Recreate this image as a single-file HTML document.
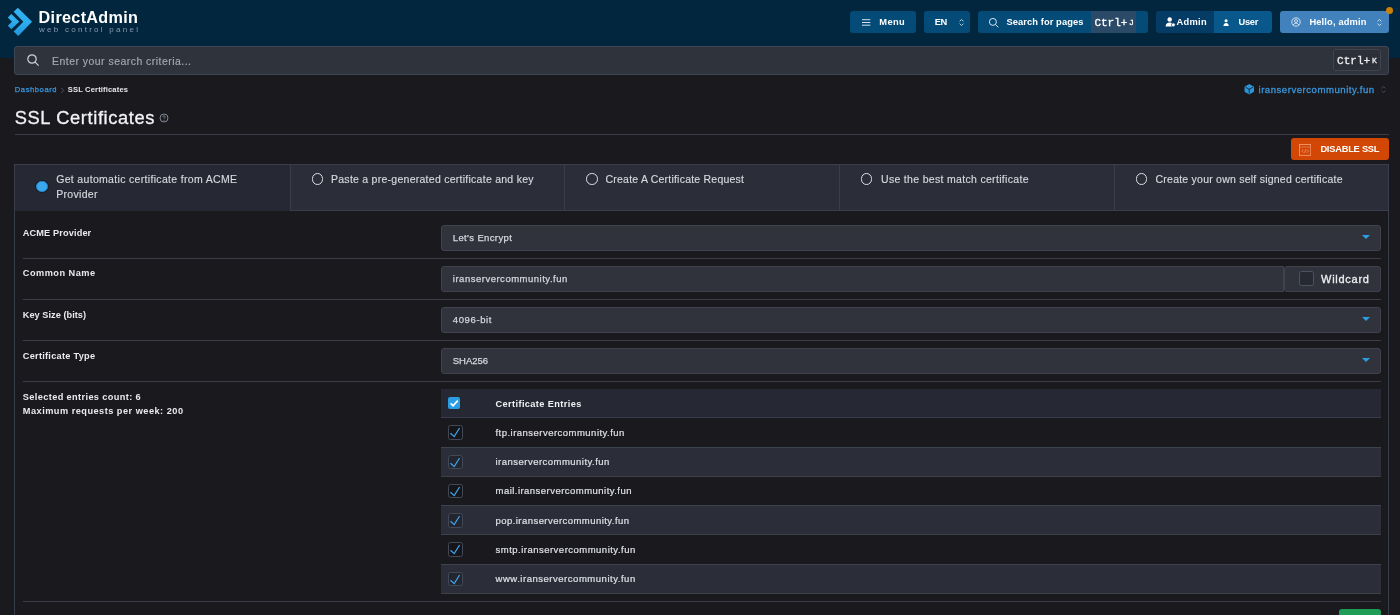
<!DOCTYPE html>
<html>
<head>
<meta charset="utf-8">
<title>SSL Certificates</title>
<style>
*{box-sizing:border-box;margin:0;padding:0}
html,body{width:1400px;height:615px;overflow:hidden;background:#1a191d;font-family:"Liberation Sans",sans-serif;color:#e6e8ec}
.a{position:absolute}
.t{position:absolute;white-space:pre}
#hdr{position:absolute;left:0;top:0;width:1400px;height:58px;background:#02263d}
.nb{position:absolute;top:11px;height:21.5px;border-radius:3px;background:#054b78}
#search{position:absolute;left:14px;top:46px;width:1375px;height:29px;background:#2f333c;border:1px solid #3e4656;border-radius:3px}
.hr{position:absolute;height:1px;background:#3a3d46}
#panel{position:absolute;left:14px;top:164px;width:1375px;height:470px;border:1px solid #383d4a}
.tab{position:absolute;top:164px;height:47px;background:#2b2e38;border:1px solid #3a3e4c}
.r{position:absolute;top:8.4px;width:11.6px;height:11.6px;border:1.5px solid #dfe1e6;border-radius:50%}
.fld{position:absolute;left:441px;height:26px;background:#30333c;border:1px solid #40434d;border-radius:3px}
.caret{position:absolute;width:0;height:0;border-left:4.2px solid transparent;border-right:4.2px solid transparent;border-top:4.6px solid #2b9de2}
.row{position:absolute;left:441px;width:940px;background:#2b2e38;border-top:1px solid #3c424e;border-bottom:1px solid #3d3f49}
.cb{position:absolute;left:448.3px;width:14.6px;height:14.6px;border:1px solid #424856;border-radius:2.5px;background:rgba(10,10,16,.22)}
.cb svg{position:absolute;left:0;top:0;width:12.6px;height:12.6px}
#tx{position:absolute;left:0;top:0;width:1400px;height:615px;will-change:transform}
</style>
</head>
<body>
<div id="hdr"></div>

<!-- logo -->
<svg class="a" style="left:0;top:0;width:40px;height:44px" viewBox="0 0 40 44">
  <defs><linearGradient id="lg" x1="0" y1="0" x2="0" y2="1"><stop offset="0" stop-color="#33b3f2"/><stop offset=".5" stop-color="#2eaef0"/><stop offset="1" stop-color="#1f96da"/></linearGradient></defs>
  <polygon points="17.8,7.8 32.1,21.8 18.2,35.9 13.7,31.5 23.3,21.8 13.7,11.7" fill="url(#lg)"/>
  <polygon points="11.3,13.9 19.3,21.7 11.3,29.3 7.8,25.8 12,21.7 7.8,17.4" fill="url(#lg)"/>
</svg>

<!-- nav buttons -->
<div class="nb" style="left:849.8px;width:66.2px">
  <svg class="a" style="left:12px;top:7px;width:9px;height:9px" viewBox="0 0 9 9"><path d="M0 1.7h8.3M0 4.5h8.3M0 7.2h8.3" stroke="#dfeaf5" stroke-width=".95"/></svg>
</div>
<div class="nb" style="left:923.5px;width:46.5px">
  <svg class="a" style="left:34.5px;top:7px;width:7px;height:9px" viewBox="0 0 7 9"><path d="M1.6 3.3L3.5 1.5L5.4 3.3M1.6 5.7L3.5 7.5L5.4 5.7" fill="none" stroke="#c9dcee" stroke-width=".9"/></svg>
</div>
<div class="nb" style="left:977.6px;width:170.4px">
  <svg class="a" style="left:10.5px;top:5.5px;width:12px;height:12px" viewBox="0 0 12 12"><circle cx="4.9" cy="4.9" r="3.5" fill="none" stroke="#d7e6f4" stroke-width="1"/><path d="M7.5 7.5L10.3 10.3" stroke="#d7e6f4" stroke-width="1"/></svg>
  <div class="a" style="left:113.5px;top:0;width:45.2px;height:21.5px;background:#2a4a68"></div>
</div>
<div class="nb" style="left:1156px;width:59px;background:#053c65;border-radius:3px 0 0 3px">
  <svg class="a" style="left:8.6px;top:5.8px;width:11.2px;height:10.2px" viewBox="0 0 11 10"><circle cx="4.6" cy="2.5" r="2.2" fill="#fff"/><path d="M0.6 9.3C0.6 6.6 2.3 5.3 4.6 5.3S8.6 6.6 8.6 9.3Z" fill="#fff"/><circle cx="8.2" cy="7.7" r="1.9" fill="#fff" stroke="#053c65" stroke-width=".7"/></svg>
</div>
<div class="nb" style="left:1214.4px;width:57.6px;border-radius:0 3px 3px 0;background:#08588c">
  <svg class="a" style="left:8.4px;top:7.8px;width:6.2px;height:7.6px" viewBox="0.6 0.3 6.8 9.2"><circle cx="4" cy="2.4" r="1.9" fill="#fff"/><path d="M0.8 9.3C0.8 6.6 2 5.1 4 5.1S7.2 6.6 7.2 9.3Z" fill="#fff"/></svg>
</div>
<div class="nb" style="left:1279.6px;width:109.4px;background:#4182bc">
  <svg class="a" style="left:11.5px;top:6px;width:10px;height:10px" viewBox="0 0 10 10"><circle cx="5" cy="5" r="4.2" fill="none" stroke="#e5eef7" stroke-width=".85"/><circle cx="5" cy="4" r="1.5" fill="none" stroke="#e5eef7" stroke-width=".85"/><path d="M2.3 8C2.9 6.6 3.8 6.3 5 6.3S7.1 6.6 7.7 8" fill="none" stroke="#e5eef7" stroke-width=".85"/></svg>
  <svg class="a" style="left:96.5px;top:7px;width:7px;height:9px" viewBox="0 0 7 9"><path d="M1.6 3.3L3.5 1.5L5.4 3.3M1.6 5.7L3.5 7.5L5.4 5.7" fill="none" stroke="#d9e7f5" stroke-width=".9"/></svg>
</div>
<div class="a" style="left:1385.5px;top:7px;width:7.2px;height:7.2px;border-radius:50%;background:#c8820a"></div>

<!-- search bar -->
<div id="search">
  <svg class="a" style="left:11.2px;top:5.8px;width:15px;height:15px" viewBox="0 0 15 15"><circle cx="6" cy="6" r="4.2" fill="none" stroke="#d0d3da" stroke-width="1.2"/><path d="M9.1 9.1L12.6 12.6" stroke="#d0d3da" stroke-width="1.2"/></svg>
  <div class="a" style="left:1318.1px;top:2.4px;width:47.5px;height:22px;border:1px solid #3f4450;border-radius:3px;background:#2d3039"></div>
</div>

<!-- breadcrumb chevron -->
<svg class="a" style="left:59.5px;top:86.5px;width:5px;height:7px" viewBox="0 0 5 7"><path d="M1.3 1L3.7 3.5L1.3 6" fill="none" stroke="#5d6473" stroke-width=".8"/></svg>

<!-- domain selector -->
<svg class="a" style="left:1243.6px;top:84.1px;width:10.5px;height:10.5px" viewBox="0 0 10.5 10.5"><polygon points="5.25,0.7 9.3,3 9.3,7.5 5.25,9.8 1.2,7.5 1.2,3" fill="#2b96d8" stroke="#2b96d8" stroke-width="1.3" stroke-linejoin="round"/><path d="M5.25 5.3V9.2M5.25 5.3L1.9 3.4M5.25 5.3L8.6 3.4" stroke="#15202c" stroke-width=".85" fill="none" stroke-linecap="round"/></svg>
<svg class="a" style="left:1380px;top:85.2px;width:7px;height:9px" viewBox="0 0 7 9"><path d="M1.6 3.3L3.5 1.5L5.4 3.3M1.6 5.7L3.5 7.5L5.4 5.7" fill="none" stroke="#4b5364" stroke-width=".9"/></svg>

<!-- title help + rule -->
<svg class="a" style="left:159.2px;top:113px;width:10px;height:10px" viewBox="0 0 10 10"><circle cx="5" cy="5" r="4" fill="none" stroke="#7e8592" stroke-width="1"/><path d="M3.8 4.1C3.8 3.2 4.4 2.8 5 2.8S6.2 3.2 6.2 3.9C6.2 4.8 5 4.8 5 5.8" fill="none" stroke="#7e8592" stroke-width=".9"/><circle cx="5" cy="7.2" r=".55" fill="#7e8592"/></svg>
<div class="hr" style="left:15px;top:133.5px;width:1374px"></div>

<!-- disable ssl -->
<div class="a" style="left:1290.5px;top:138.2px;width:98.7px;height:21.8px;border-radius:3px;background:#d24706">
  <svg class="a" style="left:8.3px;top:5.9px;width:12.4px;height:11.8px" viewBox="0 0 12.4 12"><rect x=".5" y=".5" width="11.4" height="11" fill="none" stroke="#f7a47c" stroke-width=".8"/><path d="M.5 3.1h11.4" stroke="#f7a47c" stroke-width=".8" stroke-dasharray="1.2 .8"/><path d="M4.3 5.6L2.9 7.2L4.3 8.8M8.1 5.6L9.5 7.2L8.1 8.8M6.8 5.4L5.6 9" fill="none" stroke="#f7a47c" stroke-width=".7"/></svg>
</div>

<!-- panel -->
<div id="panel"></div>

<!-- tabs -->
<div class="tab" style="left:14px;width:276px;background:#262933;border-bottom-color:#262933;border-right:none">
  <div class="a" style="left:21.4px;top:15.6px;width:11.2px;height:11.2px;border-radius:50%;background:#3ba8ee;border:1.6px solid #2484cc;box-shadow:0 0 0 1px rgba(20,24,32,.55)"></div>
</div>
<div class="tab" style="left:289.5px;width:275.8px"><div class="r" style="left:21px"></div></div>
<div class="tab" style="left:564.3px;width:275.5px"><div class="r" style="left:21px"></div></div>
<div class="tab" style="left:838.8px;width:275.8px"><div class="r" style="left:21px"></div></div>
<div class="tab" style="left:1113.6px;width:275.4px"><div class="r" style="left:21px"></div></div>

<!-- form rows -->
<div class="fld" style="top:225px;width:940px"></div>
<div class="caret" style="left:1361.5px;top:235.2px"></div>
<div class="hr" style="left:22.5px;top:258px;width:1358.5px"></div>

<div class="fld" style="top:266px;width:842.6px;border-radius:3px 0 0 3px"></div>
<div class="fld" style="left:1284.4px;top:266px;width:96.6px;border-radius:3px">
  <div class="a" style="left:13.9px;top:4px;width:14.8px;height:14.8px;border:1px solid #4c5262;border-radius:2.5px;background:#272a33"></div>
</div>
<div class="hr" style="left:22.5px;top:299px;width:1358.5px"></div>

<div class="fld" style="top:307px;width:940px"></div>
<div class="caret" style="left:1361.5px;top:317.2px"></div>
<div class="hr" style="left:22.5px;top:340px;width:1358.5px"></div>

<div class="fld" style="top:348px;width:940px"></div>
<div class="caret" style="left:1361.5px;top:358.2px"></div>
<div class="hr" style="left:22.5px;top:381px;width:1358.5px"></div>

<!-- table -->
<div class="row" style="top:389px;height:29px;border-top:none;background:#262933;border-bottom-color:#3a3d49"></div>
<div class="a" style="left:448px;top:396.8px;width:12.2px;height:12.2px;border-radius:2px;background:#2b9de3"><svg class="a" style="left:0;top:0;width:12.2px;height:12.2px" viewBox="0 0 12 12"><path d="M2.6 6.2L5 8.6L9.6 3.6" fill="none" stroke="#fff" stroke-width="1.7"/></svg></div>
<div class="row" style="top:447px;height:30px"></div>
<div class="row" style="top:505px;height:30px"></div>
<div class="row" style="top:564px;height:30px"></div>
<div class="cb" style="top:425.30px"><svg viewBox="0 0 12.6 12.6"><path d="M1.5 7.2L5.2 10.6L10.6 2" fill="none" stroke="#3fa4e8" stroke-width="1.25"/></svg></div>
<div class="cb" style="top:454.55px"><svg viewBox="0 0 12.6 12.6"><path d="M1.5 7.2L5.2 10.6L10.6 2" fill="none" stroke="#3fa4e8" stroke-width="1.25"/></svg></div>
<div class="cb" style="top:483.80px"><svg viewBox="0 0 12.6 12.6"><path d="M1.5 7.2L5.2 10.6L10.6 2" fill="none" stroke="#3fa4e8" stroke-width="1.25"/></svg></div>
<div class="cb" style="top:513.05px"><svg viewBox="0 0 12.6 12.6"><path d="M1.5 7.2L5.2 10.6L10.6 2" fill="none" stroke="#3fa4e8" stroke-width="1.25"/></svg></div>
<div class="cb" style="top:542.30px"><svg viewBox="0 0 12.6 12.6"><path d="M1.5 7.2L5.2 10.6L10.6 2" fill="none" stroke="#3fa4e8" stroke-width="1.25"/></svg></div>
<div class="cb" style="top:571.55px"><svg viewBox="0 0 12.6 12.6"><path d="M1.5 7.2L5.2 10.6L10.6 2" fill="none" stroke="#3fa4e8" stroke-width="1.25"/></svg></div>
<div class="hr" style="left:22.5px;top:601px;width:1358.5px"></div>
<div class="a" style="left:1339px;top:609.3px;width:42px;height:20px;border-radius:3px;background:#1f9d57"></div>

<!-- text -->
<div id="tx">
<div class="t" style="left:38.6px;top:6.99px;font-size:16.2px;line-height:21px;letter-spacing:0.315px;color:#ffffff;font-weight:bold;">DirectAdmin</div>
<div class="t" style="left:39.0px;top:24.83px;font-size:8px;line-height:10px;letter-spacing:2.268px;color:#8799b0;">web control panel</div>
<div class="t" style="left:879.3px;top:16.48px;font-size:9.3px;line-height:12px;letter-spacing:0.406px;color:#ffffff;font-weight:bold;">Menu</div>
<div class="t" style="left:934.7px;top:16.48px;font-size:9.3px;line-height:12px;letter-spacing:-0.422px;color:#ffffff;font-weight:bold;">EN</div>
<div class="t" style="left:1006.4px;top:16.48px;font-size:9.3px;line-height:12px;letter-spacing:0.104px;color:#ffffff;font-weight:bold;">Search for pages</div>
<div class="t" style="left:1176.4px;top:16.48px;font-size:9.3px;line-height:12px;letter-spacing:0.320px;color:#ffffff;font-weight:bold;">Admin</div>
<div class="t" style="left:1238.4px;top:16.48px;font-size:9.3px;line-height:12px;letter-spacing:-0.229px;color:#ffffff;font-weight:bold;">User</div>
<div class="t" style="left:1309.4px;top:16.48px;font-size:9.3px;line-height:12px;letter-spacing:0.156px;color:#ffffff;font-weight:bold;">Hello, admin</div>
<div class="t" style="left:52.0px;top:53.66px;font-size:10.5px;line-height:14px;letter-spacing:0.463px;color:#a4a9b4;-webkit-text-stroke:0.15px;">Enter your search criteria...</div>
<div class="t" style="left:14.8px;top:84.67px;font-size:7.6px;line-height:10px;letter-spacing:0.568px;color:#3a97dc;-webkit-text-stroke:0.25px;">Dashboard</div>
<div class="t" style="left:67.8px;top:84.67px;font-size:7.6px;line-height:10px;letter-spacing:0.139px;color:#e4e6ea;font-weight:bold;">SSL Certificates</div>
<div class="t" style="left:1258.5px;top:83.87px;font-size:9.6px;line-height:12px;letter-spacing:0.512px;color:#3a97dc;-webkit-text-stroke:0.3px;">iranservercommunity.fun</div>
<div class="t" style="left:14.7px;top:106.16px;font-size:18.3px;line-height:24px;letter-spacing:0.627px;color:#f2f3f5;-webkit-text-stroke:0.3px;">SSL Certificates</div>
<div class="t" style="left:1320.4px;top:142.98px;font-size:9.3px;line-height:12px;letter-spacing:-0.238px;color:#ffffff;font-weight:bold;">DISABLE SSL</div>
<div class="t" style="left:56.2px;top:172.26px;font-size:10.5px;line-height:14px;letter-spacing:0.323px;color:#d6d9df;-webkit-text-stroke:0.15px;">Get automatic certificate from ACME</div>
<div class="t" style="left:56.2px;top:186.76px;font-size:10.5px;line-height:14px;letter-spacing:0.313px;color:#d6d9df;-webkit-text-stroke:0.15px;">Provider</div>
<div class="t" style="left:331.0px;top:172.26px;font-size:10.5px;line-height:14px;letter-spacing:0.262px;color:#d6d9df;-webkit-text-stroke:0.15px;">Paste a pre-generated certificate and key</div>
<div class="t" style="left:605.5px;top:172.26px;font-size:10.5px;line-height:14px;letter-spacing:0.222px;color:#d6d9df;-webkit-text-stroke:0.15px;">Create A Certificate Request</div>
<div class="t" style="left:881.0px;top:172.26px;font-size:10.5px;line-height:14px;letter-spacing:0.317px;color:#d6d9df;-webkit-text-stroke:0.15px;">Use the best match certificate</div>
<div class="t" style="left:1155.5px;top:172.26px;font-size:10.5px;line-height:14px;letter-spacing:0.236px;color:#d6d9df;-webkit-text-stroke:0.15px;">Create your own self signed certificate</div>
<div class="t" style="left:22.8px;top:226.51px;font-size:9.2px;line-height:12px;letter-spacing:0.126px;color:#e8eaee;font-weight:bold;">ACME Provider</div>
<div class="t" style="left:22.8px;top:267.11px;font-size:9.2px;line-height:12px;letter-spacing:0.481px;color:#e8eaee;font-weight:bold;">Common Name</div>
<div class="t" style="left:22.8px;top:308.51px;font-size:9.2px;line-height:12px;letter-spacing:0.029px;color:#e8eaee;font-weight:bold;">Key Size (bits)</div>
<div class="t" style="left:22.8px;top:349.51px;font-size:9.2px;line-height:12px;letter-spacing:0.263px;color:#e8eaee;font-weight:bold;">Certificate Type</div>
<div class="t" style="left:22.8px;top:390.51px;font-size:9.2px;line-height:12px;letter-spacing:0.381px;color:#e8eaee;font-weight:bold;">Selected entries count: 6</div>
<div class="t" style="left:22.8px;top:404.81px;font-size:9.2px;line-height:12px;letter-spacing:0.488px;color:#e8eaee;font-weight:bold;">Maximum requests per week: 200</div>
<div class="t" style="left:452.8px;top:232.21px;font-size:9.5px;line-height:12px;letter-spacing:0.365px;color:#d4d7dd;-webkit-text-stroke:0.25px;">Let&#x27;s Encrypt</div>
<div class="t" style="left:452.8px;top:273.21px;font-size:9.5px;line-height:12px;letter-spacing:0.509px;color:#d4d7dd;-webkit-text-stroke:0.25px;">iranservercommunity.fun</div>
<div class="t" style="left:452.8px;top:314.21px;font-size:9.5px;line-height:12px;letter-spacing:0.622px;color:#d4d7dd;-webkit-text-stroke:0.25px;">4096-bit</div>
<div class="t" style="left:452.8px;top:355.21px;font-size:9.5px;line-height:12px;letter-spacing:-0.038px;color:#d4d7dd;-webkit-text-stroke:0.25px;">SHA256</div>
<div class="t" style="left:1321.0px;top:272.39px;font-size:11px;line-height:14px;letter-spacing:0.743px;color:#eef0f3;-webkit-text-stroke:0.3px;">Wildcard</div>
<div class="t" style="left:495.5px;top:397.71px;font-size:9.2px;line-height:12px;letter-spacing:0.398px;color:#f0f1f4;font-weight:bold;">Certificate Entries</div>
<div class="t" style="left:495.5px;top:426.91px;font-size:9.5px;line-height:12px;letter-spacing:0.476px;color:#dde0e5;-webkit-text-stroke:0.2px;">ftp.iranservercommunity.fun</div>
<div class="t" style="left:495.5px;top:456.16px;font-size:9.5px;line-height:12px;letter-spacing:0.481px;color:#dde0e5;-webkit-text-stroke:0.2px;">iranservercommunity.fun</div>
<div class="t" style="left:495.5px;top:485.41px;font-size:9.5px;line-height:12px;letter-spacing:0.468px;color:#dde0e5;-webkit-text-stroke:0.2px;">mail.iranservercommunity.fun</div>
<div class="t" style="left:495.5px;top:514.66px;font-size:9.5px;line-height:12px;letter-spacing:0.450px;color:#dde0e5;-webkit-text-stroke:0.2px;">pop.iranservercommunity.fun</div>
<div class="t" style="left:495.5px;top:543.91px;font-size:9.5px;line-height:12px;letter-spacing:0.488px;color:#dde0e5;-webkit-text-stroke:0.2px;">smtp.iranservercommunity.fun</div>
<div class="t" style="left:495.5px;top:573.16px;font-size:9.5px;line-height:12px;letter-spacing:0.526px;color:#dde0e5;-webkit-text-stroke:0.2px;">www.iranservercommunity.fun</div>
<div class="t" style="left:1094.4px;top:16.37px;font-size:11px;line-height:14px;letter-spacing:0.000px;color:#ffffff;font-family:'Liberation Mono',monospace;-webkit-text-stroke:0.3px;">Ctrl+</div>
<div class="t" style="left:1129.0px;top:17.57px;font-size:8px;line-height:10px;letter-spacing:0.000px;color:#ffffff;font-family:'Liberation Mono',monospace;-webkit-text-stroke:0.3px;">J</div>
<div class="t" style="left:1337.1px;top:54.37px;font-size:11px;line-height:14px;letter-spacing:0.000px;color:#eceef2;font-family:'Liberation Mono',monospace;-webkit-text-stroke:0.3px;">Ctrl+</div>
<div class="t" style="left:1372.1px;top:55.77px;font-size:8px;line-height:10px;letter-spacing:0.000px;color:#eceef2;font-family:'Liberation Mono',monospace;-webkit-text-stroke:0.3px;">K</div>
</div>
</body>
</html>
